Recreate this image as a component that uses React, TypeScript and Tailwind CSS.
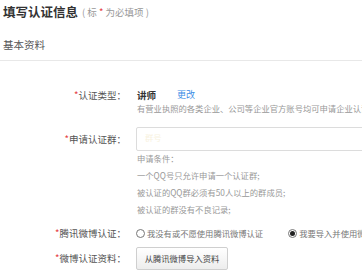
import React from 'react';

const Star = () => <span className="text-[#e4393c]">*</span>;

function Label({ text }: { text: string }) {
  return (
    <div className="w-[127px] shrink-0 text-right text-[9.5px] text-[#555] pr-[1px]">
      <Star />
      {text}
    </div>
  );
}

function Radio({ checked }: { checked?: boolean }) {
  return (
    <span className="w-[9px] h-[9px] rounded-full border border-[#777] bg-white flex items-center justify-center shrink-0">
      {checked && <span className="w-[5px] h-[5px] rounded-full bg-[#222]" />}
    </span>
  );
}

export default function App() {
  const conditions = [
    '申请条件：',
    '一个QQ号只允许申请一个认证群;',
    '被认证的QQ群必须有50人以上的群成员;',
    '被认证的群没有不良记录;',
  ];

  return (
    <div className="w-[362px] h-[270px] overflow-hidden bg-white font-['Noto_Sans_CJK_SC',sans-serif] text-[#333] whitespace-nowrap">
      {/* header */}
      <div className="h-[24px] flex items-center pl-[3px]">
        <span className="text-[12.5px] font-bold text-[#333]">填写认证信息</span>
        <span className="text-[9.5px] text-[#999] ml-[4px]">
          ( 标 <Star /> 为必填项 )
        </span>
      </div>
      <div className="h-[37px] pt-[6px] flex items-center pl-[3px] border-b border-[#e8e8e8] text-[10.5px] text-[#555]">
        基本资料
      </div>

      {/* form */}
      <div className="flex flex-col">
        <div className="flex items-center h-[16px] mt-[26px]">
          <Label text="认证类型：" />
          <div className="flex items-center ml-[10px]">
            <span className="text-[9.5px] font-bold text-[#333]">讲师</span>
            <span className="text-[9px] text-[#3a8ee6] ml-[21px]">更改</span>
          </div>
        </div>
        <div className="pl-[137px] h-[10px] leading-[10px] text-[8.3px] text-[#999]">
          有营业执照的各类企业、公司等企业官方账号均可申请企业认证
        </div>

        <div className="flex items-center mt-[14px] h-[24px]">
          <Label text="申请认证群：" />
          <div className="ml-[9px] w-[260px] shrink-0 h-[24px] border border-[#dcdcdc] rounded-[2px] flex items-start pl-[8px] pt-[3px] text-[8.3px] text-[#f8f2e0]">
            群号
          </div>
        </div>

        <div className="pl-[137px] -mt-[1px] leading-[17px] text-[8.3px] text-[#999]">
          {conditions.map((c) => (
            <div key={c}>{c}</div>
          ))}
        </div>

        <div className="flex items-center h-[16px] mt-[7px]">
          <Label text="腾讯微博认证：" />
          <div className="flex items-center ml-[9px] text-[8.3px] text-[#777]">
            <Radio />
            <span className="ml-[2px]">我没有或不愿使用腾讯微博认证</span>
            <span className="ml-[25px]">
              <Radio checked />
            </span>
            <span className="ml-[2px]">我要导入并使用微博认证资料</span>
          </div>
        </div>

        <div className="flex items-center h-[23px] mt-[6px]">
          <Label text="微博认证资料：" />
          <button className="ml-[9px] w-[92px] h-[23px] border border-[#cfcfcf] rounded-[2px] bg-gradient-to-b from-white to-[#ededed] text-[8.3px] text-[#444] flex items-center justify-center">
            从腾讯微博导入资料
          </button>
        </div>
      </div>
    </div>
  );
}
